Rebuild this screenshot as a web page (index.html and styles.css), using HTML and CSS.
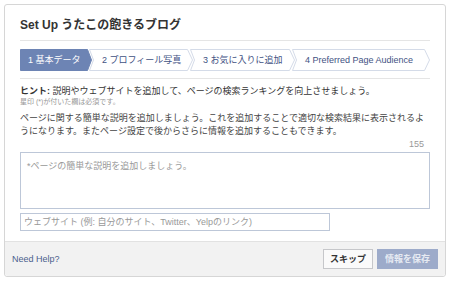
FILE: index.html
```html
<!DOCTYPE html>
<html lang="ja">
<head>
  <meta charset="UTF-8" />
  <title>Set Up</title>
  <link rel="stylesheet" href="styles.css">
</head>
<body>

  <div class="dialog">
    <div class="dialog-body">
      <!-- Header -->
      <div class="header">
        <h1>Set Up うたこの飽きるブログ</h1>
      </div>

      <!-- Steps -->
      <div class="steps-wrap">
        <ol class="steps">
          <li class="step active step-1">
            <svg class="step-shape" width="72" height="22"><polygon points="0.5,0.5 67.5,0.5 71.5,11 67.5,21.5 0.5,21.5" /></svg>
            <span class="step-label">1 基本データ</span>
          </li>
          <li class="step step-2">
            <svg class="step-shape" width="104" height="22"><polygon points="0.5,0.5 98.5,0.5 103.5,11 98.5,21.5 0.5,21.5 4.5,11" /></svg>
            <span class="step-label">2 プロフィール写真</span>
          </li>
          <li class="step step-3">
            <svg class="step-shape" width="105" height="22"><polygon points="0.5,0.5 99.5,0.5 104.5,11 99.5,21.5 0.5,21.5 4.5,11" /></svg>
            <span class="step-label">3 お気に入りに追加</span>
          </li>
          <li class="step step-4">
            <svg class="step-shape" width="138" height="22"><polygon points="0.5,0.5 132.5,0.5 137.5,11 132.5,21.5 0.5,21.5 4.5,11" /></svg>
            <span class="step-label">4 Preferred Page Audience</span>
          </li>
        </ol>
      </div>

      <!-- Form -->
      <div class="form">
        <p class="hint"><strong>ヒント:</strong> 説明やウェブサイトを追加して、ページの検索ランキングを向上させましょう。</p>
        <p class="required">星印 (*)が付いた欄は必須です。</p>
        <p class="intro">ページに関する簡単な説明を追加しましょう。これを追加することで適切な検索結果に表示されるようになります。またページ設定で後からさらに情報を追加することもできます。</p>
        <div class="counter">155</div>
        <textarea class="desc" placeholder="*ページの簡単な説明を追加しましょう。"></textarea>
        <input class="website" type="text" placeholder="ウェブサイト (例: 自分のサイト、Twitter、Yelpのリンク)">
      </div>
    </div>

    <!-- Footer -->
    <div class="footer">
      <a class="help" href="#">Need Help?</a>
      <div class="actions">
        <button class="btn btn-skip">スキップ</button>
        <button class="btn btn-save" disabled>情報を保存</button>
      </div>
    </div>
  </div>

</body>
</html>
```

FILE: styles.css
```css
html, body {
  height: 100%;
}

body {
  margin: 0;
  padding: 4px;
  box-sizing: border-box;
  background: #fff;
  font-family: "Liberation Sans", "Noto Sans CJK JP", sans-serif;
  font-size: 9px;
  color: #333;
}

.dialog {
  height: 100%;
  box-sizing: border-box;
  border: 1px solid #d6d6d6;
  border-radius: 3px;
  display: flex;
  flex-direction: column;
  background: #fff;
}

.dialog-body {
  flex: 1;
  padding: 0 15px;
}

.header {
  padding: 12px 0 7px;
  border-bottom: 1px solid #e5e5e5;
}

.header h1 {
  margin: 0;
  font-size: 12px;
  line-height: 16px;
  font-weight: bold;
  color: #333;
}

.steps-wrap {
  padding: 8px 0 7px;
  border-bottom: 1px solid #e5e5e5;
}

.steps {
  display: flex;
  margin: 0;
  padding: 0;
  list-style: none;
}

.step {
  position: relative;
  height: 22px;
  line-height: 22px;
  padding-left: 13px;
  box-sizing: border-box;
  margin-left: -3px;
  color: #3f5283;
  white-space: nowrap;
}

.step-shape {
  position: absolute;
  top: 0;
  left: 0;
}

.step-shape polygon {
  fill: #fff;
  stroke: #d4dbe8;
  stroke-width: 1;
}

.step-label {
  position: relative;
}

.step-1 { width: 72px; margin-left: 0; padding-left: 8px; }
.step-2 { width: 104px; }
.step-3 { width: 105px; }
.step-4 { width: 138px; }

.step.active {
  color: #fff;
}

.step.active .step-shape polygon {
  fill: #6d84b4;
  stroke: #6d84b4;
}

.form p {
  margin: 0;
}

.hint {
  margin-top: 6px !important;
  line-height: 12px;
}

.hint strong {
  color: #333;
}

.required {
  font-size: 7px;
  line-height: 10px;
  color: #999;
}

.intro {
  margin-top: 5px !important;
  line-height: 13px;
  color: #444;
}

.counter {
  margin-top: 1px;
  text-align: right;
  padding-right: 6px;
  font-size: 9px;
  line-height: 11px;
  color: #999;
}

.desc,
.website {
  display: block;
  box-sizing: border-box;
  border: 1px solid #bdc7d8;
  font-family: inherit;
  font-size: 9px;
  color: #333;
  outline: none;
  margin: 0;
}

.desc {
  margin-top: 2px;
  width: 100%;
  height: 57px;
  padding: 7px 6px;
  line-height: 12px;
  resize: none;
}

.website {
  margin-top: 4px;
  width: 310px;
  height: 18px;
  padding: 0 3px;
}

.desc::placeholder,
.website::placeholder {
  color: #999;
}

.footer {
  display: flex;
  align-items: center;
  justify-content: space-between;
  height: 34px;
  padding: 0 7px;
  background: #f2f2f2;
  border-top: 1px solid #e2e2e2;
  border-radius: 0 0 3px 3px;
}

.help {
  color: #4b5f8d;
  text-decoration: none;
  font-size: 9px;
}

.actions {
  display: flex;
  gap: 4px;
}

.btn {
  height: 20px;
  box-sizing: border-box;
  border: 1px solid #c6c7ca;
  font-family: inherit;
  font-size: 9px;
  font-weight: bold;
  line-height: 18px;
  padding: 0;
  cursor: pointer;
}

.btn-skip {
  width: 50px;
  background: #fafafa;
  color: #333;
}

.btn-save {
  width: 61px;
  background: #9dabca;
  border-color: #9dabca;
  color: #e6eaf2;
}
```
